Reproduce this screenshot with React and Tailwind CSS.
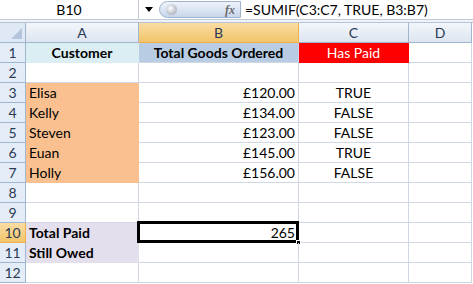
import React from "react";

const font = { fontFamily: "Lato, 'Liberation Sans', sans-serif" };

const rows = [
  { n: 1, a: "Customer", b: "Total Goods Ordered", c: "Has Paid", head: true },
  { n: 2 },
  { n: 3, a: "Elisa", b: "£120.00", c: "TRUE", orange: true },
  { n: 4, a: "Kelly", b: "£134.00", c: "FALSE", orange: true },
  { n: 5, a: "Steven", b: "£123.00", c: "FALSE", orange: true },
  { n: 6, a: "Euan", b: "£145.00", c: "TRUE", orange: true },
  { n: 7, a: "Holly", b: "£156.00", c: "FALSE", orange: true },
  { n: 8 },
  { n: 9 },
  { n: 10, a: "Total Paid", b: "265", lav: true, sel: true },
  { n: 11, a: "Still Owed", lav: true },
  { n: 12 },
];

function RowHeader({ n, active }) {
  return (
    <div
      className={
        "h-[20px] flex items-center justify-center text-[14px] text-[#2a3a55] border-r border-b " +
        (active
          ? "bg-gradient-to-b from-[#f9dca3] to-[#f2c46a] border-[#f0b14c]"
          : "bg-[#e4ecf7] border-[#9eb6ce]")
      }
    >
      {n}
    </div>
  );
}

function Cell({ className = "", children }) {
  return (
    <div className={"h-[20px] flex items-center border-r border-b border-[#d0d7e5] text-[14px] text-black whitespace-nowrap overflow-visible " + className}>
      {children}
    </div>
  );
}

export default function App() {
  return (
    <div className="w-[473px] h-[284px] bg-white overflow-hidden relative" style={font}>
      {/* formula bar */}
      <div className="h-[20px] flex items-stretch bg-white border-b border-[#c3cbd6]">
        <div className="w-[139px] flex items-center justify-center text-[14px] text-black border-r border-[#c3cbd6]">B10</div>
        <div className="w-[20px] flex items-center justify-center">
          <svg width="8" height="5" viewBox="0 0 8 5"><path d="M0 0H8L4 5Z" fill="#000" /></svg>
        </div>
        <div className="w-[82px] my-[1px] rounded-l-full border border-[#9fb3cc] bg-gradient-to-b from-[#eef3fa] via-[#dbe5f3] to-[#c8d6ea] flex items-center justify-between pl-[6px] pr-[5px]">
          <div className="w-[11px] h-[11px] rounded-full bg-[radial-gradient(circle_at_40%_40%,#ffffff,#c2c7cf_55%,#9aa2ad)]" />
          <span className="text-[12px] italic font-bold text-[#6b6b6b]" style={{ fontFamily: "'Liberation Serif', serif" }}>fx</span>
        </div>
        <div className="flex-1 flex items-center pl-[4px] text-[14px] text-black">=SUMIF(C3:C7, TRUE, B3:B7)</div>
      </div>
      <div className="h-[3px] bg-[#eef2f8] border-b border-[#b8c4d4]" />

      {/* grid */}
      <div className="grid grid-cols-[26px_113px_160px_110px_63px_1px]">
        {/* column headers */}
        <div className="h-[20px] bg-[#dfe8f5] border-r border-b border-[#9eb6ce] relative">
          <svg className="absolute right-[3px] bottom-[3px]" width="11" height="11" viewBox="0 0 11 11"><path d="M11 0V11H0Z" fill="#b3c4dc" /></svg>
        </div>
        <div className="h-[20px] flex items-center justify-center text-[14px] text-[#2a3a55] bg-gradient-to-b from-[#f3f6fb] to-[#dde5f0] border-r border-b border-[#9eb6ce]">A</div>
        <div className="h-[20px] flex items-center justify-center text-[14px] text-[#2a3a55] bg-gradient-to-b from-[#f9dca3] to-[#f2c46a] border-r border-b border-[#f0b14c]">B</div>
        <div className="h-[20px] flex items-center justify-center text-[14px] text-[#2a3a55] bg-gradient-to-b from-[#f3f6fb] to-[#dde5f0] border-r border-b border-[#9eb6ce]">C</div>
        <div className="h-[20px] flex items-center justify-center text-[14px] text-[#2a3a55] bg-gradient-to-b from-[#f3f6fb] to-[#dde5f0] border-r border-b border-[#9eb6ce]">D</div>
        <div className="h-[20px] bg-white" />

        {rows.map((r) => (
          <React.Fragment key={r.n}>
            <RowHeader n={r.n} active={r.sel} />
            {r.head ? (
              <>
                <Cell className="justify-center font-bold text-[#1f3656] bg-[#dbeef3] border-[#dbeef3]">{r.a}</Cell>
                <Cell className="justify-center font-bold text-[#1f3656] bg-[#b8cce4] border-[#b8cce4]">{r.b}</Cell>
                <Cell className="justify-center text-white bg-[#ff0000] border-[#ff0000]">{r.c}</Cell>
              </>
            ) : (
              <>
                <Cell
                  className={
                    "pl-[3px] " +
                    (r.orange ? "bg-[#fac090] border-[#fac090] " : "") +
                    (r.lav ? "bg-[#e4dfec] border-[#e4dfec] font-bold " : "")
                  }
                >
                  {r.a}
                </Cell>
                <Cell className="justify-end pr-[3px] relative">
                  {r.b}
                  {r.sel && (
                    <>
                      <div className="absolute left-[-2px] top-[-2px] right-[-1px] bottom-[-1px] border-[3px] border-black pointer-events-none" />
                      <div className="absolute right-[-3px] bottom-[-3px] w-[5px] h-[5px] bg-black border border-white" />
                    </>
                  )}
                </Cell>
                <Cell className="justify-center">{r.c}</Cell>
              </>
            )}
            <Cell />
            <div className="h-[20px] bg-white" />
          </React.Fragment>
        ))}
      </div>
    </div>
  );
}
